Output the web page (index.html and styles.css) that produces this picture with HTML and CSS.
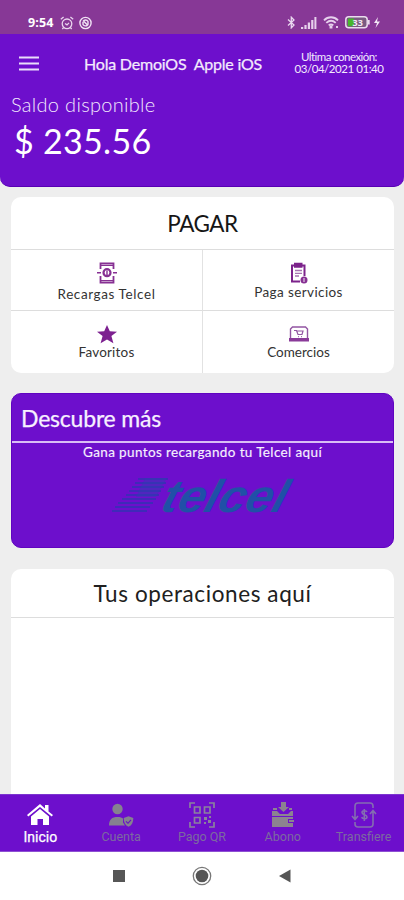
FILE: index.html
```
<!DOCTYPE html>
<html lang="es">
<head>
<meta charset="utf-8">
<meta name="viewport" content="width=device-width, initial-scale=1">
<title>Inicio</title>
<link rel="stylesheet" href="styles.css">
</head>
<body>
<div class="phone">
  <div class="status">
    <span class="clock">9:54</span>
    <svg class="alarm" width="14" height="14" viewBox="0 0 14 14" fill="none" stroke="#e9d5ee" stroke-width="1.3"><circle cx="7" cy="7.8" r="4.8"/><path d="M.8 3.3 3.6 1M13.2 3.3 10.4 1M5 7.5l2 1.4 2-2M3.5 11.7 2.3 13M10.500 11.700 11.700 13"/></svg>
    <svg class="sync" width="13" height="14" viewBox="0 0 13 14" fill="none" stroke="#f0e2f4" stroke-width="1.4"><circle cx="6.500" cy="7" r="5.600"/><path d="M4 5.500c1-2 4-2 5 0v3.300M4 6v2.500c1 1.800 3.500 1.800 4.500.5M4.500 5l4.500 4.500"/></svg>
    <span class="spacer"></span>
    <svg class="bt" width="9" height="13" viewBox="0 0 9 13" fill="none" stroke="#ead8ef" stroke-width="1.300"><path d="M1 3.500 7 9 4.300 11.800V1.200L7 4 1 9.500"/></svg>
    <svg class="signal" width="16" height="12" viewBox="0 0 16 12" fill="#e6d0ec"><path d="M0 10h2.200v2H0zM3.400 8h2.200v4H3.400zM6.800 5.500H9V12H6.800zM10.200 3h2.200v9h-2.200zM13.400 0h2v12h-2z"/></svg>
    <svg class="wifi" width="17" height="13" viewBox="0 0 17 13" fill="none" stroke="#e6d0ec" stroke-width="1.900"><path d="M1 4.300C5 .300 11 .300 15 4.300M3.300 6.900c3-2.700 6.500-2.700 9.400 0M5.700 9.400c1.500-1.300 3.100-1.300 4.600 0"/><path d="M7.500 10.500h1v1h-1zM14 10v2" /></svg>
    <svg class="battery" width="36" height="13" viewBox="0 0 36 13"><rect x=".8" y=".8" width="21.400" height="11" rx="3" fill="#7b5a82" stroke="#eadcee" stroke-width="1.500"/><path d="M3 2.500h6v7.700H3z" fill="#47b52d"/><path d="M23 4h1.700v4.500H23z" fill="#eadcee"/><text x="7.500" y="9.800" class="pct">33</text><path d="M33 1 29 7h3l-1.500 5L35 5.500h-3z" fill="#f3e8f6"/></svg>
  </div>
  <header class="header">
    <div class="topline">
      <svg class="menu" width="20" height="15" viewBox="0 0 20 15" fill="#e9ddfa"><path d="M0 .5h20v2H0zM0 6.500h20v2H0zM0 12.500h20v2H0z"/></svg>
      <span class="hello">Hola DemoiOS&nbsp; Apple iOS</span>
      <div class="last"><span class="l1">Ultima conexión:</span><span class="l2">03/04/2021 01:40</span></div>
    </div>
    <div class="saldo">Saldo disponible</div>
    <div class="amount">$ 235.56</div>
  </header>
  <main class="content">
    <section class="card pay">
      <h2 class="pay-title">PAGAR</h2>
      <div class="grid">
        <div class="cell">
          <svg class="ic" width="20" height="22" viewBox="0 0 20 22" fill="none" stroke="#873093" stroke-width="1.800"><path d="M3.500 7V1.500h13V7M3.500 14v6.500h13V14"/><path d="M3.500 3.500h13M3.500 18.500h13" stroke-width="1"/><circle cx="10" cy="10.700" r="3.500" stroke-width="2.200"/><path d="M10 8.500v4.500M0 10.700h4M16 10.700h4" stroke-width="1.400"/></svg>
          <span class="t-rec">Recargas Telcel</span>
        </div>
        <div class="cell">
          <svg class="ic up" width="20" height="22" viewBox="0 0 20 22" fill="none" stroke="#7c238b" stroke-width="2"><path d="M11 19.500H3v-16h12.500V14"/><path d="M6 1.800h6.500v3H6z" fill="#7c238b"/><path d="M6 8.500h7M6 11.300h7M6 14h4" stroke="#a775b1" stroke-width="1.300"/><circle cx="15" cy="18" r="3.500" fill="#873093" stroke="none"/><path d="M15 16v4" stroke="#fff" stroke-width=".9"/></svg>
          <span class="t-serv">Paga servicios</span>
        </div>
        <div class="cell low">
          <svg class="ic" width="20" height="20" viewBox="0 0 20 20" fill="#7d2190"><path d="m10 0 2.800 6.300 7.200.4-5.600 4.300 2 7.300L10 14.500l-6.400 3.800 2-7.300L0 6.700l7.200-.4z"/></svg>
          <span class="t-fav">Favoritos</span>
        </div>
        <div class="cell low">
          <svg class="ic" width="20" height="20" viewBox="0 0 20 20" fill="none" stroke="#9255a2" stroke-width="1.400"><path d="M1.500 13V4l2-2h13l2 2v9"/><path d="M0 13h20v3.500H0z" fill="#8a3b99" stroke="none"/><path d="M5 5.500h2.500l1.500 4h4l1-3.500H8M9 11.700h.8M12 11.700h.8" stroke-width="1.200"/></svg>
          <span class="t-com">Comercios</span>
        </div>
      </div>
    </section>
    <section class="card promo">
      <h2 class="promo-title"><span>Descubre más</span></h2>
      <p class="promo-text">Gana puntos recargando tu Telcel aquí</p>
      <svg class="telcel" width="200" height="48" viewBox="0 0 200 48">
        <path d="M28 3h30M25 7h31M22 11h32M19 15h32M16 19h33M12 23h34M8 27h35M5 31h35M2 35h35" stroke="#3233b2" stroke-width="1.700"/>
        <path d="M35 2h22L46 21H26z" fill="#2c41b0" opacity=".45"/>
        <text x="0" y="0" transform="translate(49 36) skewX(-17)" textLength="124" lengthAdjust="spacingAndGlyphs">telcel</text>
      </svg>
    </section>
    <section class="card ops">
      <h2 class="ops-title">Tus operaciones aquí</h2>
    </section>
  </main>
  <nav class="tabs">
    <div class="tab on">
      <svg width="26" height="24" viewBox="0 0 26 24" fill="#fff"><path d="m13 1 5 4.500V2h3.500v6.500L26 12l-1.300 1.600L13 4 1.300 13.600 0 12z"/><path d="m13 6 9 7.500V22h-6v-6h-5.500v6H4v-8.500z"/></svg>
      <span class="n1">Inicio</span>
    </div>
    <div class="tab">
      <svg width="26" height="24" viewBox="0 0 26 24" fill="#85828f"><circle cx="9.500" cy="6" r="5.200"/><path d="M1 22.500c0-6 3-8.500 8.500-8.500 3 0 4.500.7 5.500 1.600v4l2 2.900z"/><path d="m20.500 13.300 4.800 1.700c0 4.500-1.400 7.300-4.800 8.700-3.300-1.400-4.800-4.200-4.800-8.700z"/><path d="m18 18.300 2 2 3-3.500" fill="none" stroke="#6410c2" stroke-width="1.100"/></svg>
      <span class="n2">Cuenta</span>
    </div>
    <div class="tab">
      <svg width="26" height="26" viewBox="0 0 26 26" fill="none" stroke="#8a829d" stroke-width="1.700"><path d="M1 6V1h5M20 1h5v5M25 20v5h-5M6 25H1v-5"/><path d="M5.500 5h5.500v6H5.500zM15.500 5H21v6h-5.500zM5.500 15.500H11v5.500H5.500z"/><path d="M15 15h3v3h-3zM19 18h3v3h-3zM20 14h2v2h-2zM15 20h2v2h-2z" fill="#8a829d" stroke="none"/></svg>
      <span class="n3">Pago QR</span>
    </div>
    <div class="tab">
      <svg width="24" height="26" viewBox="0 0 24 26" fill="#8c8390"><path d="M10 0h5v5h3l-5.500 5L7 5h3z"/><path d="M1 9h5l3 3h8l3-3h2v5H1z"/><path d="M2 6h4v2H2zM18 6h3v2h-3z"/><path d="M1 15h21v2h-5v4h5v4H1z"/><path d="M18 18h5v2h-5z"/></svg>
      <span class="n4">Abono</span>
    </div>
    <div class="tab">
      <svg width="26" height="26" viewBox="0 0 26 26" fill="none" stroke="#846db1" stroke-width="1.600"><path d="M4 11V4c0-2 1-3 3-3h12c2 0 3 1 3 3v2M4 11v6M1 14l3 3.500L7 14M22 9v13c0 2-1 3-3 3H7c-2 0-3-1-3-3v-2M19 12l3-3.500 3 3.500"/><path d="M16 10c-1-2-5-1.500-5 .5 0 3 5 1.500 5 4.500 0 2-4 2.500-5.500.3M13.300 7v12"/></svg>
      <span class="n5">Transfiere</span>
    </div>
  </nav>
  <div class="system">
    <svg width="20" height="20" viewBox="0 0 20 20"><path d="M4 4h12v12H4z" fill="#565656"/></svg>
    <svg width="20" height="20" viewBox="0 0 20 20"><circle cx="10" cy="10" r="8.700" fill="none" stroke="#777" stroke-width="1.300"/><circle cx="10" cy="10" r="6.300" fill="#555"/></svg>
    <svg width="20" height="20" viewBox="0 0 20 20"><path d="M15.500 3.500v13L4 10z" fill="#565656"/></svg>
  </div>
</div>
</body>
</html>
```
FILE: styles.css
```
* { box-sizing: border-box; }
body { margin: 0; font-family: Lato, "Open Sans", sans-serif; background: #eee; }
h2, p { margin: 0; font-weight: 400; }
svg { display: block; flex: none; }
span, h2, p, .saldo, .amount { white-space: nowrap; }
.phone { width: 404px; height: 900px; display: flex; flex-direction: column; overflow: hidden; background: #eee; }

.status { flex: none; height: 34px; background: #873896; display: flex; align-items: center; padding: 11px 23px 0 28px; color: #fff; }
.clock { font: 700 12.5px/14px "Open Sans", sans-serif; width: 32px; letter-spacing: .1px; }
.sync { margin-left: 5px; }
.spacer { flex: 1; }
.signal { margin-left: 5px; }
.wifi { margin-left: 6px; }
.battery { margin-left: 5px; }
.pct { font: 700 9px "Open Sans", sans-serif; fill: #f2e9f5; }

.header { flex: none; height: 153px; background: #6d0fcc; border-bottom: 1px solid #5800b4; border-radius: 0 0 10px 10px; color: #f3eafd; padding: 0 11px; }
.topline { display: flex; height: 58px; align-items: center; padding-left: 8px; }
.hello { margin-left: 45px; font-size: 16px; letter-spacing: -.2px; -webkit-text-stroke: .25px; width: 178px; }
.last { margin-left: 32px; display: flex; flex-direction: column; align-items: center; width: 90px; font-size: 11.5px; line-height: 12px; }
.l1 { letter-spacing: -.55px; }
.l2 { letter-spacing: -.45px; }
.saldo { font-size: 20px; line-height: 24px; font-weight: 300; letter-spacing: .3px; }
.amount { font-size: 34px; line-height: 40px; margin: 5px 0 0 3px; letter-spacing: .3px; color: #fff; }

.content { flex: 1; padding: 10px 10px 0 11px; display: flex; flex-direction: column; min-height: 0; }
.card { border-radius: 10px; background: #fff; flex: none; overflow: hidden; }
.pay { height: 176px; }
.pay-title { height: 53px; line-height: 53px; text-align: center; font-size: 22.5px; letter-spacing: -.5px; color: #161616; border-bottom: 1px solid #ddd; }
.grid { display: grid; grid-template-columns: 192px 1fr; grid-template-rows: 61px 62px; }
.cell { display: flex; flex-direction: column; align-items: center; padding-top: 12px; font-size: 13.5px; line-height: 16px; color: #333; border-right: 1px solid #e2e2e2; border-bottom: 1px solid #ddd; }
.cell:nth-child(even) { border-right: 0; }
.cell.low { border-bottom: 0; padding-top: 14px; }
.cell span { margin-top: 2px; }
.cell.low span { margin-top: -1px; }
.cell .up { margin-bottom: -2px; }
.t-rec { letter-spacing: .6px; }
.t-serv { letter-spacing: .4px; }
.t-fav { letter-spacing: .2px; }

.promo { height: 155px; margin-top: 20px; background: #6d0fcc; border: 1px solid #6004c0; color: #f7f0ff; display: flex; flex-direction: column; align-items: center; }
.promo-title { align-self: stretch; height: 49px; border-bottom: 2px solid #d9bdf5; padding-left: 9px; line-height: 49px; font-size: 23px; letter-spacing: -.2px; -webkit-text-stroke: .25px; }
.promo-text { font-size: 13.5px; line-height: 18px; letter-spacing: .37px; -webkit-text-stroke: .15px; }
.telcel { margin: 15px 0 0 14px; overflow: visible; }
.telcel text { font: italic 700 46px "Liberation Sans", sans-serif; fill: #2050a7; }

.ops { flex: 1; margin-top: 21px; border-radius: 10px 10px 0 0; }
.ops-title { height: 49px; line-height: 50px; text-align: center; border-bottom: 1px solid #ddd; font-size: 22.5px; letter-spacing: .6px; color: #202020; }

.tabs { flex: none; height: 58px; background: #6d0fcc; border-top: 1px solid #7c35cf; border-bottom: 1px solid #8d50d2; display: grid; grid-template-columns: repeat(5, 1fr); }
.tab { display: flex; flex-direction: column; align-items: center; padding-top: 7px; font: 400 12.5px/16px Roboto, sans-serif; color: #7c6aa0; }
.tab svg { height: 26px; }
.tab span { margin-top: 1px; }
.tab.on { color: #fff; font-size: 14px; }
.tab.on span { -webkit-text-stroke: .25px; }

.system { flex: none; height: 48px; background: #fff; display: flex; justify-content: center; gap: 63px; padding-top: 14px; }
```
